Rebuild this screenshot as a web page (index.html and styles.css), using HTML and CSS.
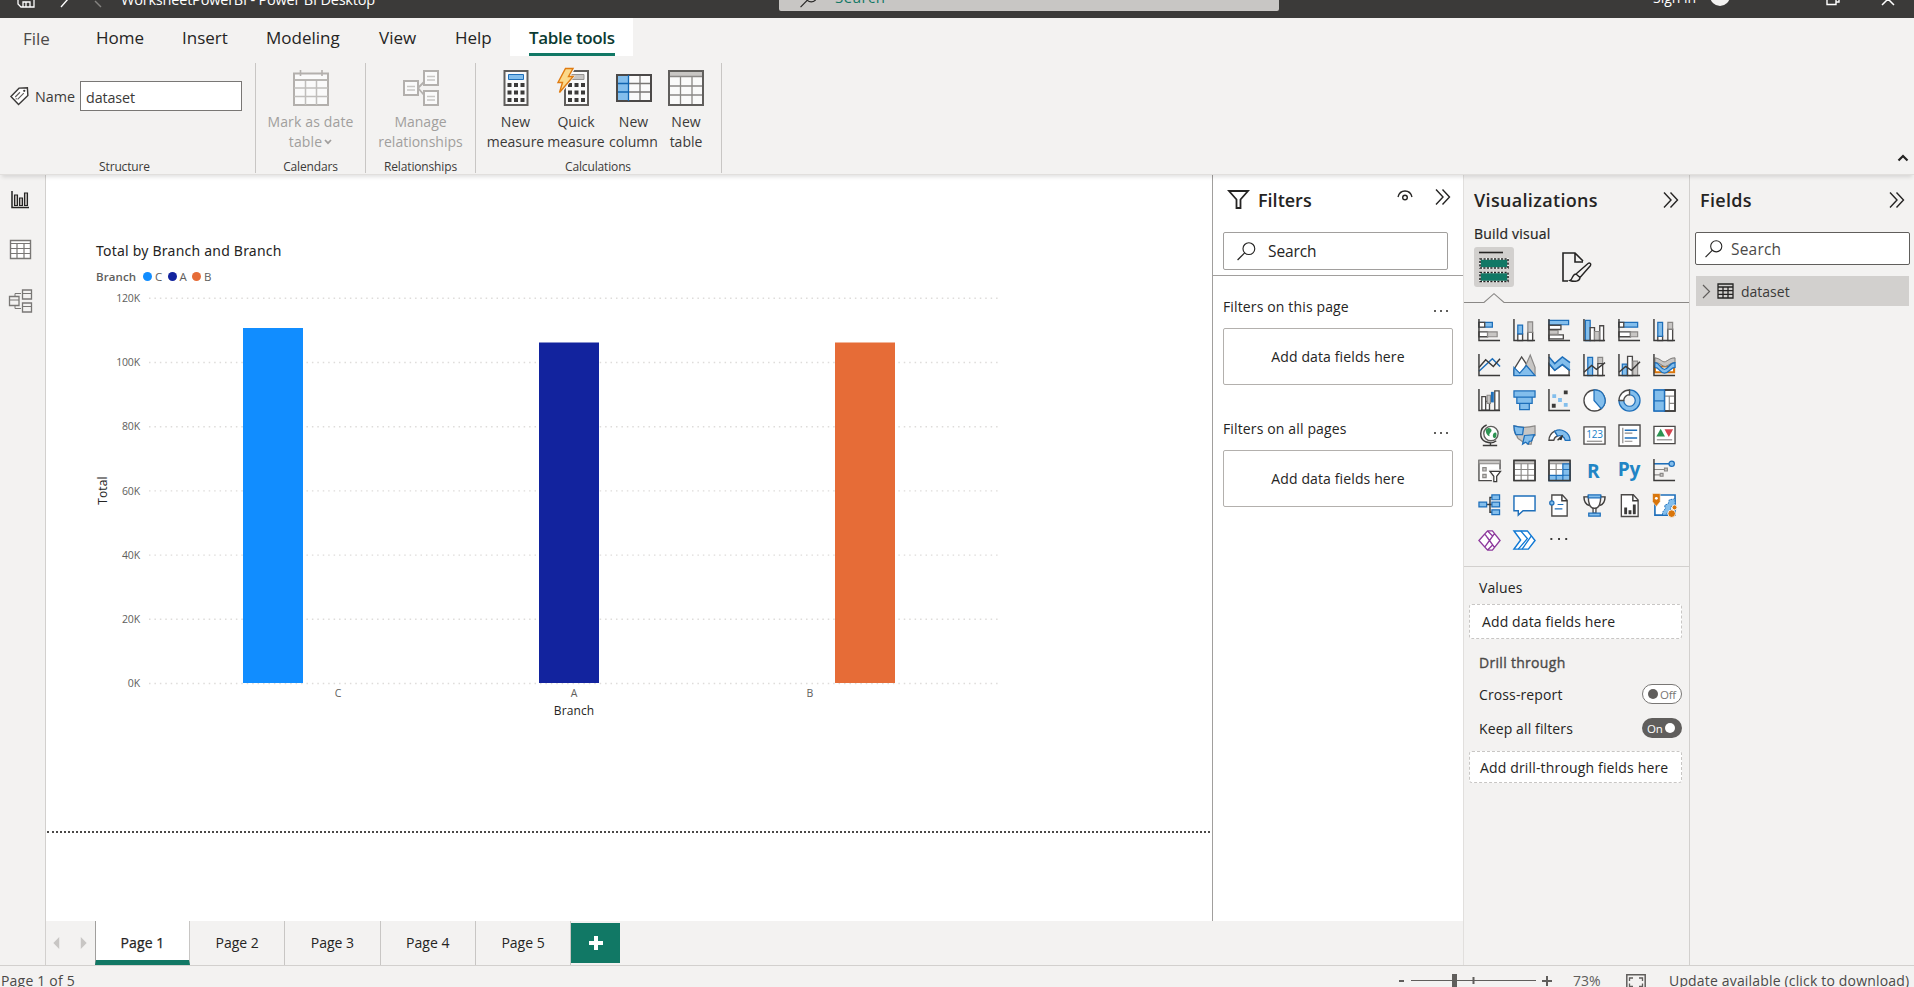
FILE: index.html
```
<!DOCTYPE html>
<html lang="en">
<head>
<meta charset="utf-8">
<title>WorksheetPowerBI - Power BI Desktop</title>
<link rel="stylesheet" href="styles.css">
</head>
<body>
<svg class="defs" aria-hidden="true">
  <defs>
    <symbol id="chevrons" viewBox="0 0 16 16"><path d="M1 .5 8 8 1 15.500M7.500 .5l7 7.500-7 7.500" fill="none" stroke="#252423" stroke-width="1.400"/></symbol>
    <symbol id="search" viewBox="0 0 20 20"><circle cx="12.500" cy="7" r="6.200" fill="none" stroke="#252423" stroke-width="1.200"/><path d="M8 11.500.6 19" stroke="#252423" stroke-width="1.300"/></symbol>
  </defs>
</svg>
<div class="app">
  <header class="titlebar">
    <svg class="tb-save" viewBox="0 0 18 18"><path d="M1 1h16v16H4l-3-3zM6 17v-5h7v5M9 12v5" fill="none" stroke="#fff" stroke-width="1.300"/></svg>
    <svg class="tb-undo" viewBox="0 0 50 18"><path d="M4 17 11 9" stroke="#fff" stroke-width="1.400"/><path d="M44 17 38 11" stroke="#858381" stroke-width="1.400"/></svg>
    <span class="tb-title">WorksheetPowerBI - Power BI Desktop</span>
    <div class="tb-search"><svg viewBox="0 0 20 20"><use href="#search"/></svg><span>Search</span></div>
    <span class="tb-sign">Sign in</span>
    <span class="tb-avatar"></span>
    <svg class="tb-restore" viewBox="0 0 14 14"><path d="M1 3h9v9.500H1zM4 3V1h9v9h-3" fill="none" stroke="#fff" stroke-width="1.400"/></svg>
    <svg class="tb-close" viewBox="0 0 14 14"><path d="m1 1 12 12M13 1 1 13" stroke="#fff" stroke-width="1.500"/></svg>
  </header>

  <nav class="menu">
    <span class="menu-item file">File</span>
    <span class="menu-item home">Home</span>
    <span class="menu-item insert">Insert</span>
    <span class="menu-item modeling">Modeling</span>
    <span class="menu-item view">View</span>
    <span class="menu-item help">Help</span>
    <span class="menu-item active"><b>Table tools</b></span>
  </nav>

  <section class="ribbon">
    <div class="group structure">
      <div class="name-row">
        <svg class="tag" viewBox="0 0 20 20"><path d="M1 10 9.500 1.200 18.300.8 18.800 9 9 18.500z" fill="#fff" stroke="#3b3a39" stroke-width="1.500"/><path d="m5.500 10.500 5-5M8 13l6.500-6.500M7 12l-1 1" stroke="#605e5c" stroke-width="1.200"/><circle cx="15" cy="4" r="1.200" fill="#3b3a39"/></svg>
        <label>Name</label>
        <div class="name-input">dataset</div>
      </div>
      <div class="group-label">Structure</div>
    </div>
    <div class="group calendars disabled">
      <div class="cmd">
        <svg viewBox="0 0 36 36"><path d="M1 3.500h34V35H1z" fill="#fafafa" stroke="#b3b0ad" stroke-width="2"/><path d="M1 10h34M1 18h34M1 26.500h34M12.500 10v25M23.500 10v25" stroke="#c0bebc" stroke-width="1.500"/><path d="M7.500 0v6M29 0v6M1 10h34" stroke="#b3b0ad" stroke-width="1.600"/></svg>
        <span>Mark as date</span><span>table<svg class="caret" viewBox="0 0 8 6"><path d="m1 1 3 3.200L7 1" fill="none" stroke="#a19f9d" stroke-width="1.700"/></svg></span>
      </div>
      <div class="group-label">Calendars</div>
    </div>
    <div class="group relations disabled">
      <div class="cmd">
        <svg viewBox="0 0 36 36"><path d="m15 18 6-6M15 18l6 7" stroke="#b3b0ad" stroke-width="1.800"/><path d="M21 1h14v14H21zM1 11h14v14H1zM21 21h14v14H21z" fill="#fafafa" stroke="#b3b0ad" stroke-width="2"/><path d="M24 6.500h8M24 10h8M4 16.500h8M4 20h8M24 26.500h8M24 30h8" stroke="#c8c6c4" stroke-width="1.500"/></svg>
        <span>Manage</span><span>relationships</span>
      </div>
      <div class="group-label">Relationships</div>
    </div>
    <div class="group calc">
      <div class="cmds">
        <div class="cmd c1">
          <svg viewBox="0 0 36 36"><path d="M6.500 1h23v34h-23z" fill="#fafafa" stroke="#605e5c" stroke-width="2"/><path d="M10.500 4.500h15v5h-15z" fill="#83beec" stroke="#1e6fba"/><path d="M9.500 13h4v4h-4zm6.500 0h4v4h-4zm6.500 0h4v4h-4zm-13 7.500h4v4h-4zm6.500 0h4v4h-4zm6.500 0h4v4h-4zM9.500 28h4v4h-4zm6.500 0h4v4h-4zm6.500 0h4v4h-4z" fill="#3b3a39"/></svg>
          <span>New</span><span>measure</span>
        </div>
        <div class="cmd c2">
          <svg viewBox="0 0 36 36"><path d="M7 1h23v34H7z" fill="#fafafa" stroke="#605e5c" stroke-width="2"/><path d="M11 4.500h15v5H11z" fill="#c8c6c4" stroke="#979593"/><path d="M10 13h4v4h-4zm6.500 0h4v4h-4zm6.500 0h4v4h-4zm-13 7.500h4v4h-4zm6.500 0h4v4h-4zm6.500 0h4v4h-4zM10 28h4v4h-4zm6.500 0h4v4h-4zm6.500 0h4v4h-4z" fill="#3b3a39"/><path class="bolt-gap" d="M6-2h11.500L13 5.500h4.500L3 24H-1z"/><path d="M7.500-1.500H15L10.500 6.500h4.700L1.500 22.500 4.500 12.500H0z" fill="#fbd98a" stroke="#e07b10" stroke-width="1.400"/></svg>
          <span>Quick</span><span>measure</span>
        </div>
        <div class="cmd c3">
          <svg viewBox="0 0 36 36"><path d="M1 5h34v26H1z" fill="#fafafa"/><path d="M1 5h11.500v26H1z" fill="#83beec"/><path d="M12 13.500h23M12 22h23M24 5v26" stroke="#797775" stroke-width="1.300"/><path d="M1 5h34v26H1z" fill="none" stroke="#4b4948" stroke-width="2"/><path d="M12.500 5v26M2 13.500h10M2 22h10" stroke="#1065b0" stroke-width="1.300"/></svg>
          <span>New</span><span>column</span>
        </div>
        <div class="cmd c4">
          <svg viewBox="0 0 36 36"><path d="M1 1h34v34H1z" fill="#fafafa"/><path d="M1 1h34v5H1z" fill="#c8c6c4"/><path d="M1 6.500h34M1 16h34M1 25h34M12.500 6v29M24 6v29" stroke="#8a8886" stroke-width="1.300"/><path d="M1 1h34v34H1z" fill="none" stroke="#605e5c" stroke-width="2"/></svg>
          <span>New</span><span>table</span>
        </div>
      </div>
      <div class="group-label">Calculations</div>
    </div>
    <svg class="collapse" viewBox="0 0 12 8"><path d="m1.500 6.500 4.500-4.500 4.500 4.500" fill="none" stroke="#252423" stroke-width="2.200"/></svg>
  </section>

  <main class="body">
    <aside class="rail">
      <svg viewBox="0 0 24 24"><path d="M4 3v16.500h17" fill="none" stroke="#252423" stroke-width="1.500"/><path d="M6.500 7h3v10.500h-3zM11.500 10h3v7.500h-3zM16.500 5h3v12.500h-3z" fill="#b3b0ad" stroke="#252423" stroke-width="1.100"/></svg>
      <svg viewBox="0 0 24 24"><path d="M2.500 2.500h20v18h-20z" fill="#fff" stroke="#797775" stroke-width="1.400"/><path d="M2.500 5.500h20M2.500 10.500h20M2.500 15.500h20M9 5.500v15M16 5.500v15" stroke="#797775" stroke-width="1.200"/></svg>
      <svg viewBox="0 0 24 24"><path d="M13 5.500H7v15h6" fill="none" stroke="#797775"/><path d="M14.500 2h9v9h-9zM1.500 8.500h9.500v9H1.500zM14.500 15h9v9h-9z" fill="#f3f2f1" stroke="#797775" stroke-width="1.300"/><path d="M14.500 5.500h9M1.500 12h9.500M14.500 18.500h9" stroke="#797775"/></svg>
    </aside>

    <section class="report">
      <div class="canvas">
        <div class="chart">
          <h2>Total by Branch and Branch</h2>
          <div class="legend"><b>Branch</b><i class="dot c"></i><span>C</span><i class="dot a"></i><span>A</span><i class="dot b"></i><span>B</span></div>
          <svg class="plot" viewBox="90 290 920 440">
            <g class="grid"><path d="M149 298.300H998M149 362.500H998M149 426.700H998M149 490.900H998M149 555.100H998M149 619.300H998M149 683.500H998"/></g>
            <path d="M243 328h60v355h-60z" fill="#118dff"/><path d="M539 342.500h60V683h-60z" fill="#12239e"/><path d="M835 342.500h60V683h-60z" fill="#e66c37"/>
            <g class="ylab"><text x="140" y="302">120K</text><text x="140" y="366">100K</text><text x="140" y="430">80K</text><text x="140" y="494.500">60K</text><text x="140" y="558.500">40K</text><text x="140" y="623">20K</text><text x="140" y="687">0K</text></g>
            <g class="xlab"><text x="338" y="697">C</text><text x="574" y="697">A</text><text x="810" y="697">B</text></g>
            <text class="axis" x="574" y="715">Branch</text>
            <text class="axis" transform="translate(107 490.500) rotate(-90)">Total</text>
          </svg>
        </div>
        <div class="page-edge"></div>
      </div>
      <div class="filters">
        <div class="filters-head">
          <svg class="funnel" viewBox="0 0 21 19"><path d="M1 1h19l-7.500 8.500V18H8.500V9.500z" fill="none" stroke="#252423" stroke-width="1.800"/></svg>
          <h3>Filters</h3>
          <svg class="eye" viewBox="0 0 16 12"><path d="M1 7c2-8 12-8 14 0" fill="none" stroke="#252423" stroke-width="1.300"/><circle cx="8" cy="7.500" r="2.300" fill="none" stroke="#252423" stroke-width="1.400"/></svg>
          <svg class="chev" viewBox="0 0 16 16"><use href="#chevrons"/></svg>
        </div>
        <div class="filters-search"><svg viewBox="0 0 20 20"><use href="#search"/></svg><span>Search</span></div>
        <div class="filters-rule"></div>
        <div class="filter-title first"><span>Filters on this page</span><i class="dots"></i></div>
        <div class="drop">Add data fields here</div>
        <div class="filter-title"><span>Filters on all pages</span><i class="dots"></i></div>
        <div class="drop">Add data fields here</div>
      </div>
      <div class="pages">
        <svg class="pager" viewBox="0 0 50 20"><path d="M13.500 4v12l-6-6zM35.500 4v12l6-6z" fill="#c8c6c4"/></svg>
        <div class="page active">Page 1</div><div class="page">Page 2</div><div class="page">Page 3</div><div class="page">Page 4</div><div class="page">Page 5</div>
        <div class="add"><svg viewBox="0 0 14 14"><path d="M7 0v14M0 7h14" stroke="#fff" stroke-width="4"/></svg></div>
      </div>
    </section>

    <aside class="viz">
      <div class="pane-head"><h3>Visualizations</h3><svg class="chev" viewBox="0 0 16 16"><use href="#chevrons"/></svg></div>
      <div class="sub">Build visual</div>
      <div class="modes">
        <div class="mode on"><svg viewBox="0 0 30 30"><path d="M0 .5h24" stroke="#252423" stroke-width="1.600"/><path d="M1 7h28v9H1zM1 20.500h28v9H1z" fill="#117865" stroke="#fff" stroke-width="1.600"/><path d="M1 7h28v9H1zM1 20.500h28v9H1z" fill="none" stroke="#252423" stroke-width="1.600" stroke-dasharray="2.200 1.300"/></svg></div>
        <div class="mode"><svg viewBox="0 0 30 30"><path d="M6 29H1V1h12l8 8M13 1v9h8" fill="none" stroke="#252423" stroke-width="1.600"/><path d="M14 22 26 11.500c1.500-1 3.500 0 2.500 2L18 25.500c0 4-6 4.500-10 3 3-1 2-6.500 6-6.500zm0 0 4 3.500" fill="#f3f2f1" stroke="#252423" stroke-width="1.400"/></svg></div>
      </div>
      <svg class="notch" viewBox="0 0 225 11"><path d="M0 9.500h20L30 .7l10 8.800h185" fill="none" stroke="#8a8886" stroke-width="1.100"/></svg>
      <div class="icons">
        <svg viewBox="0 0 24 24"><path class="b" d="M1 3.500h14v5H1z"/><path class="w" d="M1 3.500h6v5H1zM1 13.500h9v5H1z"/><path class="g" d="M10 13.500h10v5H10z"/><path class="ax" d="M1 0v22.500h22"/></svg>
        <svg viewBox="0 0 24 24"><path class="w" d="M5 15.500h5v7H5zM15.500 14h5v8.500h-5z"/><path class="b" d="M5 6.500h5v9H5z"/><path class="g" d="M15.500 3h5v11h-5z"/><path class="ax" d="M1 0v22.500h22"/></svg>
        <svg viewBox="0 0 24 24"><path class="b" d="M1 1.500h20.500V6H1z"/><path class="w" d="M1 6.500h12.500V11H1zM1 16.500h15v4.200H1z"/><path class="g" d="M1 12h9.500v4H1z"/><path class="ax" d="M1 0v22.500h22"/></svg>
        <svg viewBox="0 0 24 24"><path class="b" d="M2.500 1.500h5v21h-5z"/><path class="w" d="M7.500 9h4.500v13.500H7.500zM17.500 7h4v15.500h-4z"/><path class="g" d="M12 13h5v9.500h-5z"/><path class="ax" d="M1 0v22.500h22"/></svg>
        <svg viewBox="0 0 24 24"><path class="b" d="M1 3.500h19.500v5H1z"/><path class="w" d="M1 3.500h5v5H1zM1 13.500h12v5H1z"/><path class="g" d="M13 13.500h7.500v5H13z"/><path class="ax" d="M1 0v22.500h22"/></svg>
        <svg viewBox="0 0 24 24"><path class="w" d="M5 18h5v4.500H5zM15.500 10.500h5v12h-5z"/><path class="b" d="M5 3.500h5V18H5z"/><path class="g" d="M15.500 3.500h5v7h-5z"/><path class="ax" d="M1 0v22.500h22"/></svg>

        <svg viewBox="0 0 24 24"><path class="bl" d="m1 18 14-13 8 8"/><path class="dl" d="m1 14 7-8 8 7 7-8"/><path class="ax" d="M1 0v22.500h22"/></svg>
        <svg viewBox="0 0 24 24"><path class="w" d="m1 16 8-13 8 12v7H1z"/><path class="g" d="m11 17 7-16 5 13v8h-8z"/><path class="b" d="m1 14 6 6 7-8 9 10.500H1z"/></svg>
        <svg viewBox="0 0 24 24"><path class="w" d="m1 10 6 7 8-6 7 6v5H1z"/><path d="m1 3 6 7 8-7 8 6v8l-8-6-8 6-6-7z" fill="#83beec"/><path class="bl" d="m1 3 6 7 8-7 8 6M1 10l6 7 8-6 8 6"/><path class="ax" d="M1 0v22.500h22"/></svg>
        <svg viewBox="0 0 24 24"><path class="b" d="M5 3.500h5v19H5z"/><path class="g" d="M15.500 3.500h5V10h-5z"/><path class="w" d="M15.500 10h5v12.500h-5z"/><path class="dl" d="m1 19 8-7 5 4 9-7"/><path class="ax" d="M1 0v22.500h22"/></svg>
        <svg viewBox="0 0 24 24"><path class="b" d="M4.500 10.500h5v12h-5z"/><path class="w" d="M10 2.500h5v20h-5z"/><path class="g" d="M15.500 7.500h5v15h-5z"/><path class="dl" d="m1 19 7-6 6 4 9-9"/><path class="ax" d="M1 0v22.500h22"/></svg>
        <svg viewBox="0 0 24 24"><path d="M2 13h20v6H2z" fill="#fff" stroke="#d9760c" stroke-width="2.200"/><path d="M2 4c7 1 7 5 11 4 4-2 5-4 10-4v5c-5 0-6 3-10 4-4 0-5-4-11-4z" fill="#c8c6c4" stroke="#797775"/><path class="b" d="M2 9c5 0 6 7 10 7s5-7 11-7v5c-5 0-6 6-11 6S7 14 2 14z"/><path class="ax" d="M1 0v22.500h22"/></svg>

        <svg viewBox="0 0 24 24"><path class="w" d="M4 8h4v14H4zM8 13h4v9H8z"/><path class="w" d="M17.500 2h4.500v20h-4.500z"/><path class="g" d="M9.500 6.500H13V15H9.500z"/><path d="M13.500 3h3v11h-3z" fill="#1e6fba"/><path class="ax" d="M1 0v22.500h22"/></svg>
        <svg viewBox="0 0 24 24"><path class="b" d="M1 2h22v6.500H1zM4 8.500h16V15H4zM7 15h10v6.500H7z"/></svg>
        <svg viewBox="0 0 24 24"><path d="M4.500 5.500h4v4h-4zM10.500 9.500h4v4h-4zM16.500 14.500h4v4h-4z" fill="#83beec"/><path d="M16.500 1.500h4v4h-4zM4 15.500h4v4H4z" fill="#3b3a39"/><path class="ax" d="M1 0v22.500h22"/></svg>
        <svg viewBox="0 0 24 24"><circle class="w" cx="12" cy="12" r="11"/><path class="b" d="M11.500 1a11 11 0 0 1 7.500 19.500L11.500 12z"/></svg>
        <svg viewBox="0 0 24 24"><path class="b" d="M12 1a11 11 0 1 1-11 11h5a6 6 0 1 0 6-6z"/><path class="w" d="M12 1A11 11 0 0 0 1 12h5a6 6 0 0 1 6-6z"/></svg>
        <svg viewBox="0 0 24 24"><path class="w" d="M12 1h11v22H12z"/><path class="b" d="M1 1h11v22H1zM1 12.500h11"/><path class="gl" d="M12 7.500h11M17 7.500V23M17 15h6"/><path class="ln" d="M12 1h11v22H12"/><path class="bl thin" d="M1 1h11v22H1z"/></svg>

        <svg viewBox="0 0 24 24"><circle cx="13.500" cy="10" r="7.500" fill="#fff" stroke="#605e5c" stroke-width="1.400"/><path d="M8 6c3-3 5-2 6 0s-3 4-2 6-4 0-4-6zM16 10c3-3 4 0 3 3s-5 2-3-3z" fill="#2c9452"/><path class="ln" d="M9 1C1 4 1 16 8 18.500s9 .5 11-1M13 20v2.500M5 22.500h15"/></svg>
        <svg viewBox="0 0 24 24"><path class="g" d="M1 2c7 2 14 2 22 0v10c-3 1-3 4-4 9h-4c0-3-2-3-4-1-1-4-7-3-7-8-2-1-3-5-3-10z"/><path class="b" d="M1 2c3 1 6 1.500 10 1.500L10 11H3C2 9 1 6 1 2zM12 12l11-1c-3 2-2 5-4 7h-2l-1 3-3-2-3 2z"/></svg>
        <svg viewBox="0 0 24 24"><path class="w" d="M1 17a11 11 0 0 1 6-9.500l3 5a6 6 0 0 0-4 4.500z"/><path class="b" d="M7 7.500A11 11 0 0 1 23 17h-5a6 6 0 0 0-8-4.500z"/><path d="m11 16 5-5-2 6z" fill="#252423"/><path class="ln" d="m10 17 5-5"/></svg>
        <svg viewBox="0 0 24 24"><path class="w" d="M1 3h22v18H1z"/><text class="n" x="12" y="14.500">123</text><path class="gl" d="M4 18h16"/></svg>
        <svg viewBox="0 0 24 24"><path class="w" d="M1 1h22v22H1z"/><path class="gl" d="M5 4v16"/><path class="bl" d="M7 6.500h13M7 14.500h13"/><path class="gl" d="M7 9.500h8M7 18h8"/></svg>
        <svg viewBox="0 0 24 24"><path class="w" d="M1 2.500h22v18H1z"/><path d="m3.500 13 4.500-8 4.500 8z" fill="#2c9452"/><path d="m12 5.500 4.500 8 4.500-8z" fill="#d64550"/><path class="gl" d="M4 16.500h16"/></svg>

        <svg viewBox="0 0 24 24"><path class="w" d="M1 1.500h22v21H1z"/><path class="g" d="M1 1.500h22V5H1zM5 9h3.500v3.500H5zM5 16h3.500v3.500H5z"/><path d="M11 11h13v13H15z" fill="#f3f2f1"/><path d="M12.500 13h11l-4 5v5.500h-3V18z" fill="#fff" stroke="#3b3a39" stroke-width="1.300"/></svg>
        <svg viewBox="0 0 24 24"><path class="w" d="M1 1.500h22v21H1z"/><path class="g" d="M1 1.500h22V5H1z"/><path class="gl" d="M8.500 5v17M15.500 5v17M1 11h22M1 17h22"/><path class="ln" d="M1 1.500h22v21H1z"/></svg>
        <svg viewBox="0 0 24 24"><path class="w" d="M1 1.500h22v21H1z"/><path class="g" d="M1 1.500h22V5H1z"/><path class="b" d="M15.500 5H23v17.500H1V17h14.500z"/><path class="gl" d="M8.500 5v12M1 11h14"/><path class="bl thin" d="M8.500 17v5M15.500 17v5M15.500 11H23M15.500 17H23"/><path class="ln" d="M1 1.500h22v21H1z"/></svg>
        <svg viewBox="0 0 24 24"><text class="r" x="10.500" y="19.500">R</text></svg>
        <svg viewBox="0 0 24 24"><text class="r" x="11.500" y="18">Py</text></svg>
        <svg viewBox="0 0 24 24"><path class="gl" d="M1 11h11M1 16.500h7"/><path class="bl" d="M1 5h17"/><circle class="b" cx="19.500" cy="5" r="2.800"/><path class="g" d="M12 9.500h3v3h-3zM7.500 15h3v3h-3z"/><path class="ax" d="M1 0v22.500h22"/></svg>

        <svg viewBox="0 0 24 24"><path class="ln" d="M9 11h6M15 3.500h-2.500V19H15"/><path class="b" d="M1 8.500h8v5H1zM14.500 1h8v5h-8zM14.500 8.500h8v5h-8zM14.500 16.500h8v5h-8z"/></svg>
        <svg viewBox="0 0 24 24"><path d="M1 2h22v15.500H10.500L5.500 22v-4.500H1z" fill="#fff" stroke="#1e6fba" stroke-width="1.500"/></svg>
        <svg viewBox="0 0 24 24"><path class="w" d="M4 1h11l5 5.500V23H4z"/><path class="ln" d="M14.500 1v6H20"/><circle class="b" cx="4" cy="9.500" r="2.200"/><path class="bl thin" d="M10 11h6M7 15.500h8"/></svg>
        <svg viewBox="0 0 24 24"><path class="ln" d="M6 3H1c0 5 2 8 6 9M18 3h5c0 5-2 8-6 9"/><path class="w" d="M5.500 2h13c0 7-1 13-6.500 13S5.500 9 5.500 2z"/><path class="w" d="M10.500 15h3v5h-3z"/><path class="b" d="M5.500 1h13v3h-13zM6 20h12v3H6z"/></svg>
        <svg viewBox="0 0 24 24"><path class="w" d="M3.500.8H16l5 5.500V23.500H3.500z"/><path class="ln" d="M15.500 1v6H21"/><path d="M6.500 14h3v7h-3zM11 17h3v4h-3zM15.500 11h3v10h-3z" fill="#3b3a39"/></svg>
        <svg viewBox="0 0 24 24"><path d="M2 1h21v21H2z" fill="#fff" stroke="#1e6fba" stroke-width="1.700"/><path d="M10 22v-3l3-4-1-3 4-2 1-4 6-1v7l-4 1-1 4-3 2-1 3z" fill="#83beec" stroke="#1e6fba" stroke-width="1" stroke-dasharray="2 1"/><path d="M-.5-.5h8V8L3.500 13-.5 8z" fill="#d9760c" stroke="#f3f2f1" stroke-width=".6"/><circle cx="3.500" cy="4.500" r="1.500" fill="#fff"/><circle cx="19.500" cy="20.500" r="4" fill="#d9760c" stroke="#f3f2f1"/><circle cx="22.500" cy="14" r="2.600" fill="#d9760c" stroke="#f3f2f1"/></svg>

        <svg viewBox="0 0 24 24"><path d="m1 12 9-10h5l8 10-8 10h-5zM7 5l5 7-5 7M12 12l5 7M17 5l-5 7-2-3M10 22l5-5M10 2l5 5" fill="#fff" stroke="#8e3a9d" stroke-width="1.400"/></svg>
        <svg viewBox="0 0 24 24"><path d="M1 2h14l8 10-7 9H1l7-9.500z" fill="#fff" stroke="#0f78d4" stroke-width="1.500"/><path d="m8 2 7 8L5.500 21M19 7.500 9.500 21" fill="none" stroke="#0f78d4" stroke-width="1.400"/></svg>
        <svg viewBox="0 0 24 24"><path d="M2.500 9.500h2v2h-2zM10.500 9.500h2v2h-2zM18 9.500h2v2h-2z" fill="#3b3a39"/></svg>
      </div>
      <div class="wells">
        <div class="well-label values">Values</div>
        <div class="well v1">Add data fields here</div>
        <div class="well-label drill">Drill through</div>
        <div class="switch-row cross"><span>Cross-report</span><div class="switch off"><i></i><em>Off</em></div></div>
        <div class="switch-row keep"><span>Keep all filters</span><div class="switch on"><em>On</em><i></i></div></div>
        <div class="well v2">Add drill-through fields here</div>
      </div>
    </aside>

    <aside class="fields">
      <div class="pane-head"><h3>Fields</h3><svg class="chev" viewBox="0 0 16 16"><use href="#chevrons"/></svg></div>
      <div class="fields-search"><svg viewBox="0 0 20 20"><use href="#search"/></svg><span>Search</span></div>
      <div class="field-row">
        <svg class="expand" viewBox="0 0 9 15"><path d="m1 1 6.500 6.500L1 14" fill="none" stroke="#605e5c" stroke-width="1.200"/></svg>
        <svg class="tbl" viewBox="0 0 17 16"><path d="M1 1h15v14H1zM1 4h15M1 7.700h15M1 11.400h15M6 4v11M11 4v11" fill="none" stroke="#252423" stroke-width="1.300"/></svg>
        <span>dataset</span>
      </div>
    </aside>
  </main>

  <footer class="status">
    <span class="count">Page 1 of 5</span>
    <svg class="zoom" viewBox="0 0 156 22"><path d="M-1 15h5M142 15h10M147 10v10" stroke="#605e5c" stroke-width="2"/><path d="M11 14.500h125" stroke="#605e5c" stroke-width="1.200"/><path d="M52 8h5v14h-5zM72.500 11h2v7h-2z" fill="#605e5c"/></svg>
    <span class="pct">73%</span>
    <svg class="fit" viewBox="0 0 20 16"><path d="M.8.8h18.400v14.400H.8z" fill="none" stroke="#605e5c" stroke-width="1.500"/><path d="M3.500 7V4H7M13 4h3.500v3M3.500 9.500v3H7M13 12.500h3.500v-3" fill="none" stroke="#605e5c" stroke-width="1.300"/></svg>
    <span class="update">Update available (click to download)</span>
  </footer>
</div>
</body>
</html>
```
FILE: styles.css
```
* { box-sizing: border-box; }
body { margin: 0; overflow: hidden; background: #f3f2f1; color: #252423; font-family: "Open Sans", "Noto Sans", sans-serif; font-size: 14px; }
svg { display: block; flex: none; overflow: visible; }
h2, h3 { margin: 0; }
.defs { position: absolute; width: 0; height: 0; }
.app { height: 987px; display: flex; flex-direction: column; overflow: hidden; }

/* Title bar, partly scrolled above the window */
.titlebar { flex: none; height: 38px; margin-top: -20px; display: flex; align-items: center; background: #3b3a39; color: #fff; white-space: nowrap; }
.tb-save { width: 18px; height: 18px; margin-left: 17px; }
.tb-undo { width: 50px; height: 18px; margin-left: 22px; }
.tb-title { width: 260px; margin-left: 14px; font-size: 14.500px; letter-spacing: -.2px; }
.tb-search { display: flex; align-items: center; width: 500px; height: 24px; margin: -1px 0 0 398px; padding-left: 21px; background: #c8c6c4; border-radius: 2px; color: #117865; font-size: 15px; line-height: 20px; }
.tb-search span { margin-top: -3px; letter-spacing: .5px; }
.tb-search svg { width: 18px; height: 18px; margin-right: 17px; }
.tb-sign { width: 47px; margin-left: 374px; margin-top: -4px; font-size: 14px; }
.tb-avatar { width: 20px; height: 20px; margin: -6px 0 0 10px; border-radius: 50%; background: #f3f2f1; }
.tb-restore { width: 14px; height: 14px; margin-left: 96px; }
.tb-close { width: 14px; height: 14px; margin-left: 41px; }

.menu { flex: none; height: 38px; display: flex; font-size: 17px; line-height: 39px; white-space: nowrap; }
.file { width: 74px; margin-left: 22px; padding: 1px 0 0 1px; color: #4b4948; }
.home { width: 86px; }
.insert { width: 84px; }
.modeling { width: 113px; }
.view { width: 76px; }
.help { width: 55px; }
.menu-item.active { width: 123px; padding: 0 18px 0 19px; background: #fff; }
.active b { display: block; height: 38px; font-weight: 600; border-bottom: 3px solid #117865; color: #0b3b33; letter-spacing: -.35px; }

.ribbon { flex: none; height: 119px; display: flex; padding: 7px 0 2px; border-bottom: 1px solid #e1dfdd; box-shadow: 0 4px 4px -2px rgba(0,0,0,.12); z-index: 1; position: relative; color: #3b3a39; }
.group { display: flex; flex-direction: column; border-right: 1px solid #c8c6c4; height: 110px; white-space: nowrap; }
.structure { width: 256px; }
.calendars, .relations { width: 110px; }
.calc { width: 246px; }
.name-row { display: flex; align-items: center; height: 30px; margin: 18px 0 0 10px; }
.tag { width: 19px; height: 19px; }
.name-row label { width: 45px; margin-left: 6px; font-size: 14.300px; }
.name-input { width: 162px; height: 30px; padding-left: 5px; border: 1px solid #797775; background: #fff; line-height: 31px; font-size: 14.300px; letter-spacing: -.1px; }
.group-label { margin: auto 0 -1px; height: 15px; line-height: 15px; text-align: center; font-size: 12px; letter-spacing: -.15px; }
.structure .group-label { padding-right: 6px; }
.calc .group-label { padding-right: 1px; }
.cmd { display: flex; flex-direction: column; align-items: center; padding-top: 7px; line-height: 20px; font-size: 14px; letter-spacing: 0; }
.cmd > svg { width: 36px; height: 36px; margin-bottom: 6px; }
.cmd > span { display: flex; align-items: center; }
.calendars .cmd { letter-spacing: .15px; }
.caret { width: 8px; height: 6px; margin-left: 2px; }
.disabled .cmd { color: #a19f9d; }
.cmds { display: flex; padding-left: 9px; }
.c1 { width: 61px; } .c2 { width: 60px; } .c3 { width: 55px; } .c4 { width: 50px; }
.bolt-gap { fill: #f3f2f1; }
.collapse { width: 12px; height: 8px; margin: 91px 5px 0 auto; }

.body { flex: none; height: 790px; display: grid; grid-template-columns: 46px 1418px 226px 224px; }
.rail { border-right: 1px solid #d2d0ce; }
.rail svg { width: 24px; height: 24px; margin: 13px 0 0 8px; }
.rail svg + svg { margin-top: 26px; }
.report { display: grid; grid-template: 746px 44px / 1167px 250px; border-right: 1px solid #e1dfdd; }
.canvas { background: #fff; border-right: 1px solid #a19f9d; }
.chart { height: 656px; padding: 64px 0 0 44px; }
.chart h2 { height: 22px; padding: 1px 0 0 6px; font: 400 14px/22px "Noto Sans", sans-serif; letter-spacing: .22px; }
.legend { display: flex; align-items: center; height: 16px; margin-top: 7px; padding-left: 6px; font-size: 11.500px; color: #605e5c; }
.legend b { width: 47px; font-weight: 600; letter-spacing: .1px; }
.dot { width: 9px; height: 9px; margin-right: 3px; border-radius: 50%; }
.legend span { width: 12.500px; }
.dot.c { background: #118dff; } .dot.a { background: #12239e; } .dot.b { background: #e66c37; }
.plot { width: 920px; height: 440px; margin-top: 6px; }
.grid path { fill: none; stroke: #dedcda; stroke-width: 1.400; stroke-dasharray: 1.500 3.930; }
.ylab { font-size: 10.500px; fill: #605e5c; text-anchor: end; letter-spacing: -.15px; }
.xlab { font-size: 10.500px; fill: #605e5c; text-anchor: middle; }
.axis { font-size: 12px; fill: #252423; text-anchor: middle; letter-spacing: .1px; }
.page-edge { margin: 0 2px 0 1px; border-top: 2px dotted #4b4948; }

.filters { background: #fff; padding-left: 10px; }
.filters-head { display: flex; align-items: center; height: 50px; padding-left: 5px; }
h3 { font-size: 18px; font-weight: 600; line-height: 24px; }
.funnel { width: 21px; height: 19px; margin: -2px 9px 0 0; }
.filters h3 { width: 139px; }
.eye { width: 16px; height: 12px; margin: -8px 22px 0 0; }
.chev { width: 16px; height: 16px; }
.filters-head .chev { margin-top: -6px; }
.filters-search { display: flex; align-items: center; width: 225px; height: 38px; margin-top: 7px; padding-left: 13px; border: 1px solid #a19f9d; border-radius: 2px; font-size: 15.500px; letter-spacing: -.1px; }
.filters-search svg { width: 19px; height: 19px; margin-right: 12px; }
.filters-rule { margin: 5px 0 0 -10px; border-top: 1px solid #a19f9d; }
.filter-title { display: flex; width: 225px; justify-content: space-between; align-items: center; height: 24px; margin-top: 31px; letter-spacing: .14px; }
.filter-title.first { margin-top: 18px; }
.filter-title + .drop { margin-top: 10px; }
.dots { width: 14px; height: 2px; margin-top: 9px; background: repeating-linear-gradient(90deg, #605e5c 0 2px, transparent 2px 6px); }
.drop { width: 230px; height: 57px; border: 1px solid #b3b0ad; border-radius: 2px; text-align: center; line-height: 56px; letter-spacing: .12px; }

.pages { grid-column: 1 / 3; display: flex; background: #f3f2f1; }
.pager { width: 49px; height: 20px; margin-top: 12px; }
.page { width: 95.300px; text-align: center; line-height: 43px; border-right: 1px solid #c8c6c4; letter-spacing: 0; }
.page.active { width: 95px; border-left: 1px solid #a19f9d; border-bottom: 5px solid #117865; background: #fff; letter-spacing: .1px; -webkit-text-stroke: .25px #252423; }
.add { display: flex; width: 49px; height: 40px; margin-top: 2px; align-items: center; justify-content: center; background: #117865; }
.add svg { width: 14px; height: 14px; }

.viz { border-right: 1px solid #d2d0ce; }
.pane-head { display: flex; justify-content: space-between; align-items: center; height: 50px; padding: 0 10px; }
.viz h3 { letter-spacing: .33px; }
.fields .pane-head { padding: 0 9px 0 10px; }
.fields h3 { letter-spacing: .3px; }
.sub { padding-left: 10px; height: 22px; line-height: 17px; letter-spacing: .2px; -webkit-text-stroke: .2px #252423; }
.modes { display: flex; gap: 43px; padding-left: 10px; }
.mode { width: 40px; height: 40px; padding: 5px; border-radius: 3px; }
.mode.on { background: #d2d0ce; }
.mode svg { width: 30px; height: 30px; }
.notch { width: 225px; height: 11px; margin-top: 6px; }
.icons { display: grid; grid-template-columns: repeat(6, 23px); grid-auto-rows: 23px; gap: 12px; padding: 15px 0 0 14px; height: 263px; border-bottom: 1px solid #d2d0ce; }
.icons svg { width: 23px; height: 23px; }
.b { fill: #83beec; stroke: #1e6fba; stroke-width: 1.300; }
.g { fill: #c8c6c4; stroke: #8a8886; stroke-width: 1.200; }
.w { fill: #fff; stroke: #4b4948; stroke-width: 1.400; }
.ax, .ln, .dl { fill: none; stroke: #3b3a39; stroke-width: 1.500; }
.bl { fill: none; stroke: #1e6fba; stroke-width: 1.600; }
.thin { stroke-width: 1.200; }
.gl { fill: none; stroke: #8a8886; stroke-width: 1.200; }
.n { font-size: 10.500px; fill: #1a83c8; text-anchor: middle; letter-spacing: -.2px; }
.r { font-size: 20px; font-weight: 700; fill: #2185c5; text-anchor: middle; letter-spacing: -.3px; }
.wells { padding-left: 5px; font-size: 14px; letter-spacing: .12px; }
.well-label { height: 20px; line-height: 20px; padding-left: 10px; margin-top: 11px; }
.well { width: 213px; border: 1px dashed #c8c6c4; background: #fff; border-radius: 3px; white-space: nowrap; }
.v1 { height: 35px; margin-top: 6px; padding-left: 12px; line-height: 34px; }
.drill { margin-top: 14px; color: #4b4948; letter-spacing: .3px; -webkit-text-stroke: .35px #4b4948; }
.switch-row { display: flex; justify-content: space-between; align-items: center; width: 213px; height: 20px; padding-left: 10px; margin-top: 11px; }
.keep { margin-top: 14px; }
.v2 { height: 32px; margin-top: 13px; padding-left: 10px; line-height: 31px; letter-spacing: .16px; }
.switch { display: flex; align-items: center; width: 40px; height: 20px; padding: 0 5px; border-radius: 10px; font-size: 11.500px; gap: 2px; }
.switch i { width: 10px; height: 10px; border-radius: 50%; flex: none; }
.switch em { font-style: normal; letter-spacing: -.3px; padding-top: 1px; }
.switch.off { border: 1px solid #797775; background: #fff; color: #797775; }
.switch.off i { background: #605e5c; }
.switch.on { background: #605e5c; color: #fff; gap: 3px; }
.switch.on i { background: #fff; }

.fields-search { display: flex; align-items: center; width: 215px; height: 33px; margin: 7px 0 0 5px; padding-left: 9px; border: 1px solid #605e5c; border-radius: 2px; background: #fff; color: #4b4948; font-size: 15.500px; letter-spacing: .2px; }
.fields-search span { margin-top: 1px; }
.fields-search svg { width: 18px; height: 18px; margin-right: 8px; }
.field-row { display: flex; align-items: center; width: 213px; height: 30px; margin: 11px 0 0 6px; padding-left: 6px; background: #d2d0ce; font-size: 14px; color: #3b3a39; }
.expand { width: 9px; height: 15px; margin-right: 6px; }
.tbl { width: 17px; height: 16px; margin-right: 7px; }

.status { flex: none; display: flex; height: 30px; border-top: 1px solid #d2d0ce; color: #4b4948; line-height: 30px; white-space: nowrap; }
.count { width: 1400px; padding-left: 1px; letter-spacing: .2px; }
.zoom { width: 156px; height: 22px; }
.pct { margin-left: 17px; width: 53px; color: #605e5c; }
.fit { width: 20px; height: 16px; margin-top: 8px; }
.update { margin-left: 23px; letter-spacing: .17px; }
```
